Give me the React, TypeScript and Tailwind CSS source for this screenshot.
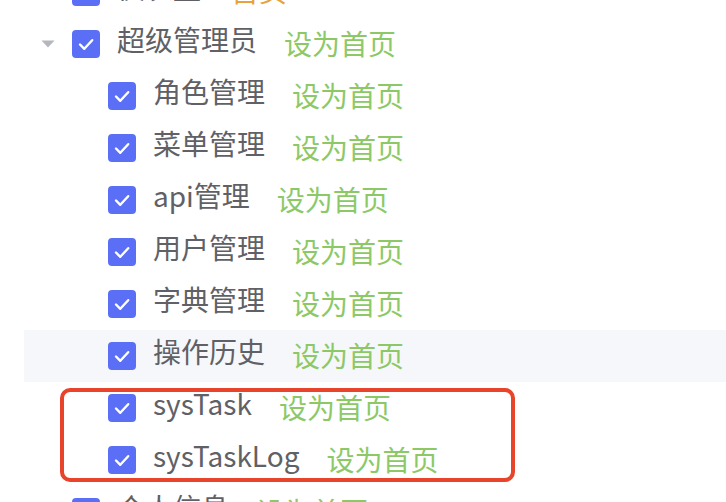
type Node = {
  label: string;
  level: 1 | 2;
  expanded?: boolean;
  home?: boolean;
  hover?: boolean;
};

const nodes: Node[] = [
  { label: "仪表盘", level: 1, home: true },
  { label: "超级管理员", level: 1, expanded: true },
  { label: "角色管理", level: 2 },
  { label: "菜单管理", level: 2 },
  { label: "api管理", level: 2 },
  { label: "用户管理", level: 2 },
  { label: "字典管理", level: 2 },
  { label: "操作历史", level: 2, hover: true },
  { label: "sysTask", level: 2 },
  { label: "sysTaskLog", level: 2 },
  { label: "个人信息", level: 1 },
];

const Checkbox = () => (
  <span className="flex h-[28px] w-[28px] shrink-0 items-center justify-center rounded-[4px] bg-[#5a6ff5]">
    <svg width="28" height="28" viewBox="0 0 28 28" fill="none">
      <path
        d="M8 14.5 L12.3 18.8 L20.2 10.2"
        stroke="white"
        strokeWidth="2.4"
        strokeLinecap="round"
        strokeLinejoin="round"
      />
    </svg>
  </span>
);

const Caret = ({ show }: { show?: boolean }) => (
  <span className="flex w-[48px] shrink-0 items-center justify-center">
    {show && (
      <svg width="14" height="8" viewBox="0 0 14 8">
        <path d="M0.5 0.5 L13.5 0.5 L7 7.5 Z" fill="#b4b7bd" />
      </svg>
    )}
  </span>
);

const TreeRow = ({ node }: { node: Node }) => (
  <div
    className={`flex h-[52px] items-center ${node.level === 2 ? "pl-[36px]" : ""} ${
      node.hover ? "bg-[#f5f7fa]" : ""
    }`}
  >
    <Caret show={node.expanded} />
    <Checkbox />
    <span className="ml-[17px] -translate-y-[5px] whitespace-nowrap text-[28px] leading-none text-[#5f6166]">
      {node.label}
    </span>
    {node.home ? (
      <span className="ml-[30px] -translate-y-[2px] text-[28px] leading-none text-[#e6a23c]">首页</span>
    ) : (
      <span className="ml-[27px] -translate-y-[1px] text-[28px] leading-none text-[#8cc966]">设为首页</span>
    )}
  </div>
);

export default function App() {
  return (
    <div
      className="relative h-[502px] w-[726px] overflow-hidden bg-white"
      style={{ fontFamily: '"Noto Sans CJK SC", "Noto Sans", sans-serif' }}
    >
      <div className="-mt-[34px] flex flex-col pl-6">
        {nodes.map((n) => (
          <TreeRow key={n.label} node={n} />
        ))}
      </div>
      <div className="absolute left-[60px] top-[388px] h-[94px] w-[455px] rounded-[10px] border-[4px] border-[#e8442b]" />
    </div>
  );
}
